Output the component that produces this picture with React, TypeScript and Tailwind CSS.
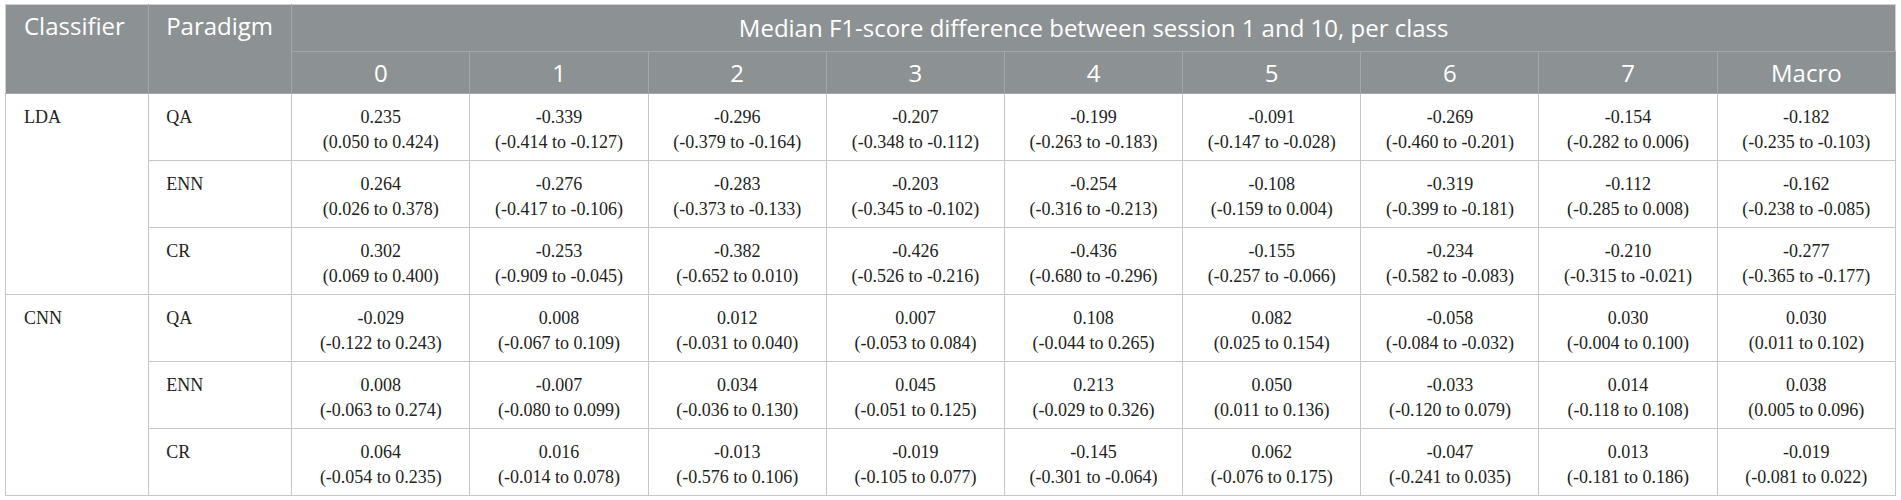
const classes = ['0', '1', '2', '3', '4', '5', '6', '7', 'Macro'];

type Row = { paradigm: string; cells: [string, string][] };

const groups: { classifier: string; rows: Row[] }[] = [
  {
    classifier: 'LDA',
    rows: [
      {
        paradigm: 'QA',
        cells: [
          ['0.235', '(0.050 to 0.424)'],
          ['-0.339', '(-0.414 to -0.127)'],
          ['-0.296', '(-0.379 to -0.164)'],
          ['-0.207', '(-0.348 to -0.112)'],
          ['-0.199', '(-0.263 to -0.183)'],
          ['-0.091', '(-0.147 to -0.028)'],
          ['-0.269', '(-0.460 to -0.201)'],
          ['-0.154', '(-0.282 to 0.006)'],
          ['-0.182', '(-0.235 to -0.103)'],
        ],
      },
      {
        paradigm: 'ENN',
        cells: [
          ['0.264', '(0.026 to 0.378)'],
          ['-0.276', '(-0.417 to -0.106)'],
          ['-0.283', '(-0.373 to -0.133)'],
          ['-0.203', '(-0.345 to -0.102)'],
          ['-0.254', '(-0.316 to -0.213)'],
          ['-0.108', '(-0.159 to 0.004)'],
          ['-0.319', '(-0.399 to -0.181)'],
          ['-0.112', '(-0.285 to 0.008)'],
          ['-0.162', '(-0.238 to -0.085)'],
        ],
      },
      {
        paradigm: 'CR',
        cells: [
          ['0.302', '(0.069 to 0.400)'],
          ['-0.253', '(-0.909 to -0.045)'],
          ['-0.382', '(-0.652 to 0.010)'],
          ['-0.426', '(-0.526 to -0.216)'],
          ['-0.436', '(-0.680 to -0.296)'],
          ['-0.155', '(-0.257 to -0.066)'],
          ['-0.234', '(-0.582 to -0.083)'],
          ['-0.210', '(-0.315 to -0.021)'],
          ['-0.277', '(-0.365 to -0.177)'],
        ],
      },
    ],
  },
  {
    classifier: 'CNN',
    rows: [
      {
        paradigm: 'QA',
        cells: [
          ['-0.029', '(-0.122 to 0.243)'],
          ['0.008', '(-0.067 to 0.109)'],
          ['0.012', '(-0.031 to 0.040)'],
          ['0.007', '(-0.053 to 0.084)'],
          ['0.108', '(-0.044 to 0.265)'],
          ['0.082', '(0.025 to 0.154)'],
          ['-0.058', '(-0.084 to -0.032)'],
          ['0.030', '(-0.004 to 0.100)'],
          ['0.030', '(0.011 to 0.102)'],
        ],
      },
      {
        paradigm: 'ENN',
        cells: [
          ['0.008', '(-0.063 to 0.274)'],
          ['-0.007', '(-0.080 to 0.099)'],
          ['0.034', '(-0.036 to 0.130)'],
          ['0.045', '(-0.051 to 0.125)'],
          ['0.213', '(-0.029 to 0.326)'],
          ['0.050', '(0.011 to 0.136)'],
          ['-0.033', '(-0.120 to 0.079)'],
          ['0.014', '(-0.118 to 0.108)'],
          ['0.038', '(0.005 to 0.096)'],
        ],
      },
      {
        paradigm: 'CR',
        cells: [
          ['0.064', '(-0.054 to 0.235)'],
          ['0.016', '(-0.014 to 0.078)'],
          ['-0.013', '(-0.576 to 0.106)'],
          ['-0.019', '(-0.105 to 0.077)'],
          ['-0.145', '(-0.301 to -0.064)'],
          ['0.062', '(-0.076 to 0.175)'],
          ['-0.047', '(-0.241 to 0.035)'],
          ['0.013', '(-0.181 to 0.186)'],
          ['-0.019', '(-0.081 to 0.022)'],
        ],
      },
    ],
  },
];

export default function App() {
  return (
    <div className="bg-white w-[1901px] h-[500px] pt-[4px] pl-[5px]">
      <table className="table-fixed border-collapse w-[1891px] border border-[#d2d2d2]">
        <colgroup>
          <col className="w-[143px]" />
          <col className="w-[143px]" />
          {classes.map((c) => (
            <col key={c} className="w-[178px]" />
          ))}
        </colgroup>
        <thead className="bg-[#8c9294] text-white font-['Open_Sans',sans-serif] text-[24px] leading-[30px]">
          <tr className="h-[47px]">
            <th
              rowSpan={2}
              className="align-top text-left font-normal pl-[18px] pt-[6px] border border-[#a2a7a9] border-t-[#d2d2d2] border-l-[#d2d2d2]"
            >
              Classifier
            </th>
            <th
              rowSpan={2}
              className="align-top text-left font-normal pl-[17px] pt-[6px] border border-[#a2a7a9] border-t-[#d2d2d2]"
            >
              Paradigm
            </th>
            <th
              colSpan={9}
              className="text-center font-normal border border-[#a2a7a9] border-t-[#d2d2d2] border-r-[#d2d2d2]"
            >
              Median F1-score difference between session 1 and 10, per class
            </th>
          </tr>
          <tr className="h-[42px]">
            {classes.map((c) => (
              <th key={c} className="text-center font-normal border border-[#a2a7a9]">
                {c}
              </th>
            ))}
          </tr>
        </thead>
        <tbody className="font-['Liberation_Serif',serif] text-[18px] leading-[25px] text-[#222]">
          {groups.map((g) =>
            g.rows.map((r, i) => (
              <tr key={g.classifier + r.paradigm} className="h-[67px]">
                {i === 0 && (
                  <td rowSpan={3} className="align-top pl-[18px] pt-[11px] border border-[#c6c6c6]">
                    {g.classifier}
                  </td>
                )}
                <td className="align-top pl-[17px] pt-[11px] border border-[#c6c6c6]">{r.paradigm}</td>
                {r.cells.map(([v, ci], k) => (
                  <td key={k} className="align-top text-center pt-[11px] border border-[#c6c6c6]">
                    <div>{v}</div>
                    <div>{ci}</div>
                  </td>
                ))}
              </tr>
            ))
          )}
        </tbody>
      </table>
    </div>
  );
}
